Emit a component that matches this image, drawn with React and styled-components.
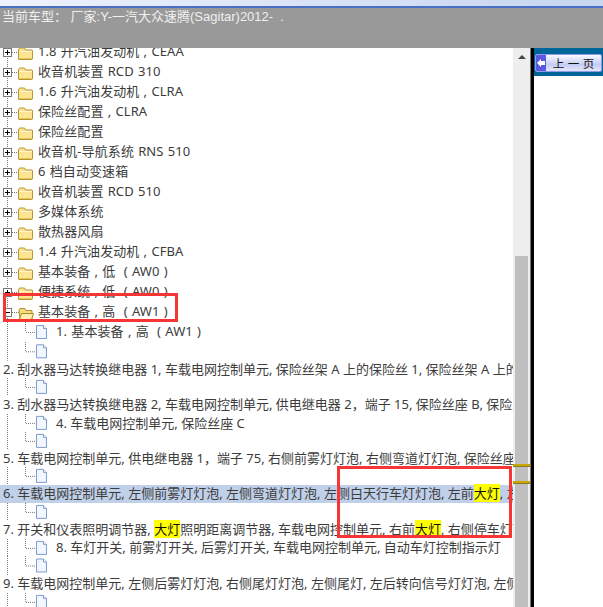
import React from "react";
import styled, { createGlobalStyle } from "styled-components";

const Global = createGlobalStyle`
  html, body { margin: 0; padding: 0; background: #fff; }
  body { font-family: "Noto Sans CJK SC", sans-serif; }
`;

const Page = styled.div`
  position: relative;
  width: 603px;
  height: 607px;
  overflow: hidden;
  display: flex;
  flex-direction: column;
`;

const TopStrip = styled.div`
  flex: none;
  height: 6px;
  background: linear-gradient(90deg, #eef2fc, #c6d5f0);
  border-bottom: 2px solid #4a70c6;
`;

const CarBar = styled.div`
  flex: none;
  height: 40px;
  background: #999;
  color: #f0f0f0;
  font: 13px/18px "Liberation Sans", "Noto Sans CJK SC", sans-serif;
  padding-left: 2px;
  white-space: pre;
`;

const Body = styled.div`
  flex: 1;
  min-height: 0;
  display: flex;
`;

const TreePane = styled.div`
  width: 513px;
  flex: none;
  overflow: hidden;
  font: 13px/18px "Noto Sans", "Noto Sans CJK SC", sans-serif;
  color: #3c3c3c;
`;

const TreeInner = styled.div`
  margin-top: -6px;
`;

const FolderRow = styled.div`
  height: 20px;
  display: flex;
  align-items: center;
  white-space: pre;
  gap: 3px;
`;

const RowLabel = styled.span`
  margin-bottom: 2px;
  letter-spacing: 0.1px;
  word-spacing: 0.7px;
`;

const LeafRow = styled.div`
  height: ${(p) => p.$h}px;
  display: flex;
  align-items: center;
  white-space: pre;
  gap: 8px;
`;

const TextRow = styled.div`
  height: 17.8px;
  line-height: 17.8px;
  white-space: nowrap;
  padding-left: 3px;
  background: ${(p) => (p.$selected ? "#c0d0e9" : "transparent")};
`;

const Mark = styled.span`
  background: #ff0;
  color: #111;
`;

const Scrollbar = styled.div`
  position: relative;
  width: 17px;
  flex: none;
  background: #eee;
`;

const Arrow = styled.div`
  margin: 7px auto 0;
  width: 0;
  height: 0;
  border-left: 4px solid transparent;
  border-right: 4px solid transparent;
  border-bottom: 4px solid #444;
`;

const Thumb = styled.div`
  position: absolute;
  left: 2px;
  right: 2px;
  top: 208px;
  bottom: 0;
  background: #bfbfbf;
`;

const Tick = styled.div`
  position: absolute;
  left: 0;
  right: 0;
  top: ${(p) => p.$top}px;
  height: 2px;
  background: #c8a800;
  border-bottom: 1px solid #8a7a20;
`;

const Divider = styled.div`
  width: 4px;
  flex: none;
  background: linear-gradient(90deg, #777 0 33%, #000 33%);
`;

const RightPane = styled.div`
  flex: 1;
  background: #fff;
`;

const NavBar = styled.div`
  height: 28px;
  background: #006699;
  padding: 6px 1px 0;
  box-sizing: border-box;
`;

const PrevButton = styled.button`
  display: flex;
  width: 67px;
  height: 18px;
  padding: 0;
  border: 1px solid #8f9bea;
  border-radius: 2px;
  background: linear-gradient(180deg, #fafaff, #c4ccf4 60%, #e4e8fb);
  font: 11.5px/16px "Noto Sans CJK SC", sans-serif;
  color: #111;
  overflow: hidden;
`;

const ButtonArrow = styled.span`
  width: 10px;
  flex: none;
  background: #5a5ae0;
  display: flex;
  align-items: center;
  justify-content: center;
`;

const ButtonLabel = styled.span`
  flex: 1;
  text-align: center;
  word-spacing: 1px;
  white-space: pre;
`;

const RedBox = styled.div`
  position: absolute;
  left: ${(p) => p.$l}px;
  top: ${(p) => p.$t}px;
  width: ${(p) => p.$w}px;
  height: ${(p) => p.$h}px;
  box-sizing: border-box;
  border: 3px solid #f73535;
`;

const Icon = styled.svg`
  flex: none;
  display: block;
`;

const gutterLine = (h) => (
  <line x1="7.5" y1="0" x2="7.5" y2={h} stroke="#777" strokeDasharray="1 1" />
);

function FolderNode({ open }) {
  return (
    <Icon width="35" height="20" viewBox="0 0 35 20">
      {gutterLine(20)}
      <line x1="12" y1="10.5" x2="19" y2="10.5" stroke="#777" strokeDasharray="1 1" />
      <rect x="3.5" y="6.5" width="8" height="8" fill="#fff" stroke="#777" />
      <path d="M5 10.5h5" stroke="#000" />
      {!open && <path d="M7.5 8v5" stroke="#000" />}
      {open ? (
        <>
          <path d="M19 8.5l1-2h5l1 2h6v9H20z" fill="#f6dc80" stroke="#b08d24" />
          <path d="M19.5 17.5l2-6h12l-2 6z" fill="#fdeeb0" stroke="#b08d24" />
        </>
      ) : (
        <>
          <path d="M18.5 8l1-2h5l1 2h6.5q.5 0 .5.5v8q0 1-1 1h-12.5q-.5 0-.5-.5z" fill="#fbe493" stroke="#b8962e" />
          <path d="M19.5 9.5h12.5" stroke="#fff6cf" />
          <path d="M19.5 16.5h12.5" stroke="#eac552" />
        </>
      )}
    </Icon>
  );
}

function LeafIcon({ h }) {
  return (
    <Icon width="48" height={h} viewBox={`0 0 48 ${h}`}>
      {gutterLine(h)}
      <line x1="25.5" y1="0" x2="25.5" y2={h / 2} stroke="#777" strokeDasharray="1 1" />
      <line x1="26" y1={h / 2 + 0.5} x2="36" y2={h / 2 + 0.5} stroke="#777" strokeDasharray="1 1" />
      <path
        d={`M36.5 ${h / 2 - 6.5}h7l3 3v10h-10z`}
        fill="#f2f6fd"
        stroke="#7e9bd2"
      />
      <path d={`M43.5 ${h / 2 - 6.5}v3h3`} fill="#fff" stroke="#7e9bd2" />
    </Icon>
  );
}

const folders = [
  "1.8 升汽油发动机 , CEAA",
  "收音机装置 RCD 310",
  "1.6 升汽油发动机 , CLRA",
  "保险丝配置 , CLRA",
  "保险丝配置",
  "收音机-导航系统 RNS 510",
  "6 档自动变速箱",
  "收音机装置 RCD 510",
  "多媒体系统",
  "散热器风扇",
  "1.4 升汽油发动机 , CFBA",
  "基本装备 , 低  ( AW0 )",
  "便捷系统 , 低  ( AW0 )",
];

export default function App() {
  return (
    <Page>
      <Global />
      <TopStrip />
      <CarBar>{"当前车型： 厂家:Y-一汽大众速腾(Sagitar)2012-  ."}</CarBar>
      <Body>
        <TreePane>
          <TreeInner>
            {folders.map((f) => (
              <FolderRow key={f}>
                <FolderNode />
                <RowLabel>{f}</RowLabel>
              </FolderRow>
            ))}
            <FolderRow>
              <FolderNode open />
              <RowLabel>{"基本装备 , 高  ( AW1 )"}</RowLabel>
            </FolderRow>
            <LeafRow $h={20}>
              <LeafIcon h={20} />
              <RowLabel>{"1. 基本装备 , 高  ( AW1 )"}</RowLabel>
            </LeafRow>
            <LeafRow $h={18.6}>
              <LeafIcon h={18.6} />
            </LeafRow>
            <TextRow>2. 刮水器马达转换继电器 1, 车载电网控制单元, 保险丝架 A 上的保险丝 1, 保险丝架 A 上的保险丝</TextRow>
            <LeafRow $h={17.8}>
              <LeafIcon h={17.8} />
            </LeafRow>
            <TextRow>3. 刮水器马达转换继电器 2, 车载电网控制单元, 供电继电器 2，端子 15, 保险丝座 B, 保险丝座</TextRow>
            <LeafRow $h={17.8}>
              <LeafIcon h={17.8} />
              4. 车载电网控制单元, 保险丝座 C
            </LeafRow>
            <LeafRow $h={17.8}>
              <LeafIcon h={17.8} />
            </LeafRow>
            <TextRow>5. 车载电网控制单元, 供电继电器 1，端子 75, 右侧前雾灯灯泡, 右侧弯道灯灯泡, 保险丝座 C</TextRow>
            <LeafRow $h={17.8}>
              <LeafIcon h={17.8} />
            </LeafRow>
            <TextRow $selected>
              6. 车载电网控制单元, 左侧前雾灯灯泡, 左侧弯道灯灯泡, 左侧白天行车灯灯泡, 左前<Mark>大灯</Mark>, 左侧
            </TextRow>
            <LeafRow $h={17.8}>
              <LeafIcon h={17.8} />
            </LeafRow>
            <TextRow>
              7. 开关和仪表照明调节器, <Mark>大灯</Mark>照明距离调节器, 车载电网控制单元, 右前<Mark>大灯</Mark>, 右侧停车灯灯泡
            </TextRow>
            <LeafRow $h={17.8}>
              <LeafIcon h={17.8} />
              8. 车灯开关, 前雾灯开关, 后雾灯开关, 车载电网控制单元, 自动车灯控制指示灯
            </LeafRow>
            <LeafRow $h={19}>
              <LeafIcon h={19} />
            </LeafRow>
            <TextRow>9. 车载电网控制单元, 左侧后雾灯灯泡, 右侧尾灯灯泡, 左侧尾灯, 左后转向信号灯灯泡, 左侧停车灯</TextRow>
            <LeafRow $h={17.8}>
              <LeafIcon h={17.8} />
            </LeafRow>
          </TreeInner>
        </TreePane>
        <Scrollbar>
          <Arrow />
          <Thumb />
          <Tick $top={416} />
          <Tick $top={433} />
        </Scrollbar>
        <Divider />
        <RightPane>
          <NavBar>
            <PrevButton>
              <ButtonArrow>
                <Icon width="8" height="8" viewBox="0 0 8 8">
                  <path d="M0 4l4-4v2h4v4H4v2z" fill="#fff" />
                </Icon>
              </ButtonArrow>
              <ButtonLabel>{"上 一 页"}</ButtonLabel>
            </PrevButton>
          </NavBar>
        </RightPane>
      </Body>
      <RedBox $l={3} $t={293} $w={175} $h={29} />
      <RedBox $l={337} $t={466} $w={175} $h={72} />
    </Page>
  );
}
